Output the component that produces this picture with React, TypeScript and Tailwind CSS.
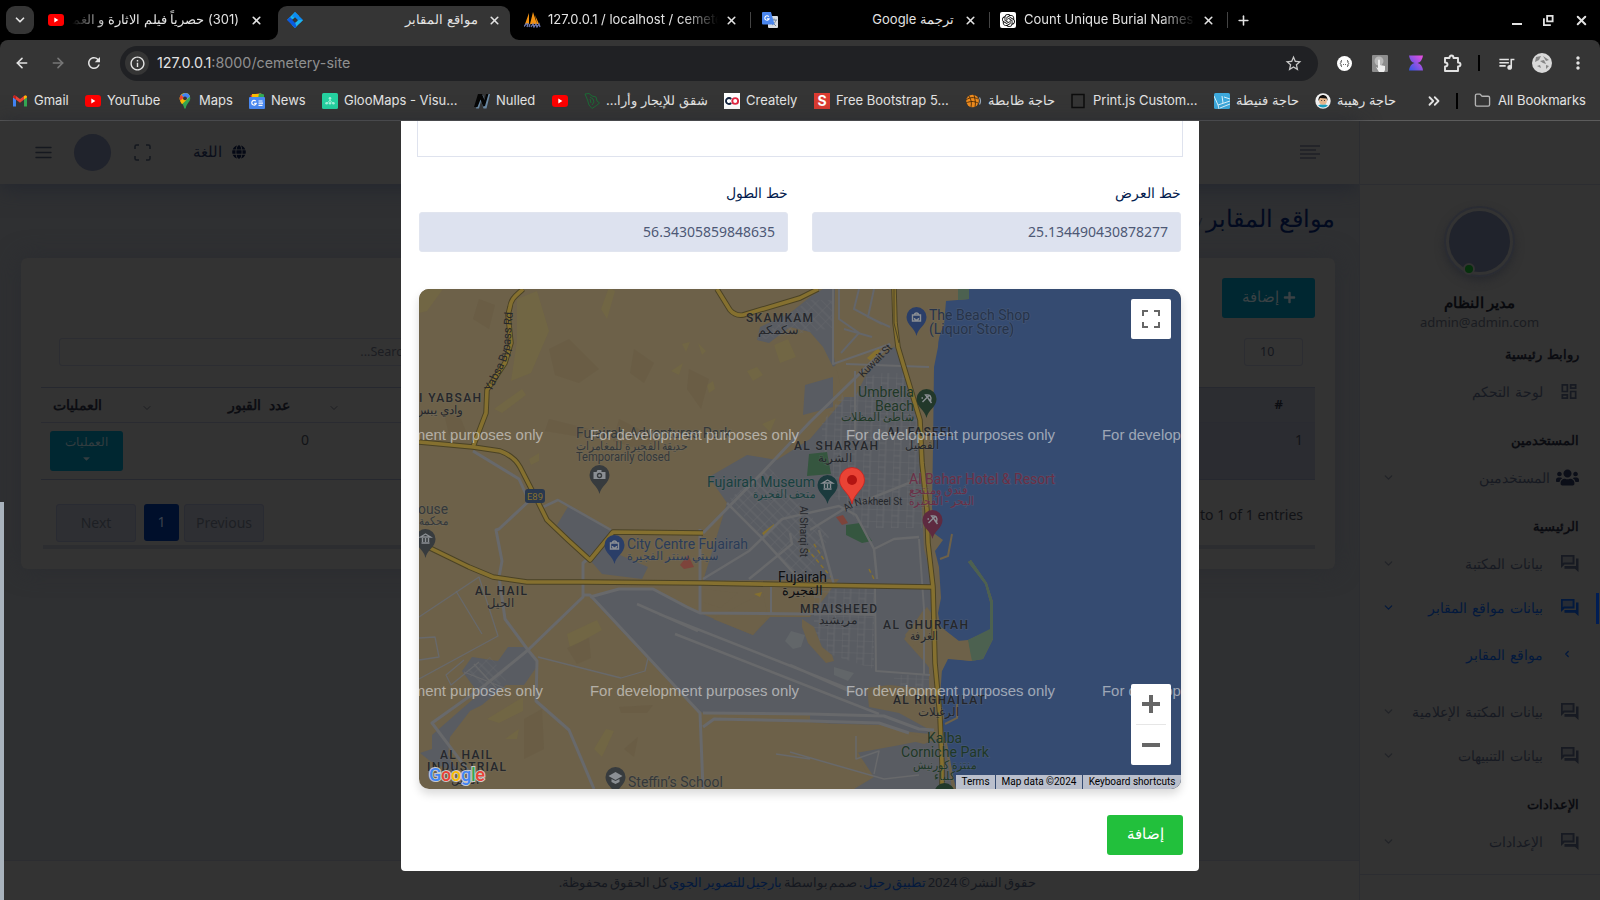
import React from "react";
import {
  ArrowLeft,
  ArrowRight,
  ChevronDown,
  ChevronLeft,
  ChevronsRight,
  Folder,
  Plus,
  X,
} from "lucide-react";
import { FaPlus, FaUsers, FaCaretDown, FaGlobe } from "react-icons/fa";
import {
  MdInfoOutline,
  MdOutlineDashboard,
  MdQueueMusic,
  MdRefresh,
  MdStarOutline,
  MdMoreVert,
} from "react-icons/md";
import { SiOpenai } from "react-icons/si";

/* ---------- favicons ---------- */

const YouTubeIcon = () => (
  <svg width="16" height="16" viewBox="0 0 16 16">
    <rect x="0" y="2" width="16" height="12" rx="3" fill="#f00" />
    <path d="M6.3 5.6v4.8L10.4 8z" fill="#fff" />
  </svg>
);

const GmailIcon = () => (
  <svg width="16" height="16" viewBox="0 0 16 16">
    <path d="M1 4v9.5h3V6.500z" fill="#4285f4" />
    <path d="M15 4v9.5h-3V6.500z" fill="#34a853" />
    <path d="M1 4.2C1 2.4 2.8 2 4 3l4 3 4-3c1.200-1 3-.6 3 1.200L8 9.700z" fill="#ea4335" />
    <path d="M12 3c1.200-1 3-.6 3 1.200L12 6.600z" fill="#fbbc04" />
    <path d="M4 3C2.800 2 1 2.400 1 4.200L4 6.600z" fill="#c5221f" />
  </svg>
);

const MapsIcon = () => (
  <svg width="16" height="16" viewBox="0 0 16 16">
    <path d="M8 0a5.300 5.300 0 0 0-5.300 5.300C2.700 9 6.500 10.500 7.300 15.500h1.400C9.500 10.500 13.300 9 13.300 5.300A5.300 5.300 0 0 0 8 0z" fill="#34a853" />
    <path d="M8 0a5.300 5.300 0 0 1 5 3.400L5 11.200C3.600 9.400 2.700 7.900 2.700 5.300A5.300 5.300 0 0 1 8 0z" fill="#fbbc04" />
    <path d="M8 0a5.300 5.300 0 0 1 5 3.400L9.500 6.500 4 2z" fill="#4285f4" />
    <path d="M4 2L7 4.500 3.200 7.800A5.300 5.300 0 0 1 4 2z" fill="#ea4335" />
    <circle cx="8" cy="5.300" r="1.900" fill="#353535" />
  </svg>
);

const NewsIcon = () => (
  <svg width="16" height="16" viewBox="0 0 16 16">
    <path d="M1.500 2L12 0l1 5H2z" fill="#ea4335" />
    <path d="M3 1h10v5H3z" fill="#fbbc04" />
    <path d="M10 0l5 1.500V6H9z" fill="#34a853" />
    <rect y="4" width="16" height="12" rx="1" fill="#4a8af4" />
    <path d="M6.800 8.200a2.300 2.300 0 1 0 .5 2.200H5.200M9.500 8h4M9.500 10.200h4.500M9.500 12.300h4" stroke="#fff" strokeWidth="1.200" fill="none" />
  </svg>
);

const GlooIcon = () => (
  <svg width="16" height="16" viewBox="0 0 16 16">
    <rect width="16" height="16" rx="1.500" fill="#25d1a0" />
    <path d="M8 5v3M4.500 10.500L8 7.500l3.500 3" stroke="#b8f5e2" strokeWidth=".8" fill="none" />
    <g fill="#a4f0da">
      <circle cx="8" cy="5.200" r="1.300" />
      <circle cx="4.600" cy="10.200" r="1.300" />
      <circle cx="8" cy="10.200" r="1.300" />
      <circle cx="11.400" cy="10.200" r="1.300" />
    </g>
  </svg>
);

const NulledIcon = () => (
  <svg width="16" height="16" viewBox="0 0 16 16">
    <path d="M2 15.500L6 2h3l2.500 7.500L13.500 1H16l-3.500 14.500h-3L7 8l-2 7.500z" fill="#6b8aa5" />
    <path d="M0 14L4 1h4l2.500 6L12 1h2.500L11 13 9 13.500 6.500 6.500 3.500 14z" fill="#060606" />
  </svg>
);

const LeafIcon = () => (
  <svg width="16" height="16" viewBox="0 0 16 16" fill="none" stroke="#1c6b35" strokeWidth="1">
    <path d="M1 1l4-.5 3 2.500 4 1 1 4 2.500 2-3 2.500L8 15.500 5 12 3.500 7z" />
    <path d="M6 4l3 2 1 3-2 3M6 6l1 4" />
  </svg>
);

const CreatelyIcon = () => (
  <svg width="16" height="16" viewBox="0 0 16 16">
    <rect width="16" height="16" fill="#fff" />
    <path d="M7.200 6a3 3 0 1 0 0 4" stroke="#14243f" strokeWidth="1.900" fill="none" />
    <circle cx="11.200" cy="8" r="2.900" stroke="#e02742" strokeWidth="1.900" fill="none" />
  </svg>
);

const BootstrapSIcon = () => (
  <span className="flex h-4 w-4 items-center justify-center bg-[#dc3b31] text-[14px] leading-none font-bold text-white">S</span>
);

const BallIcon = () => (
  <svg width="16" height="16" viewBox="0 0 16 16">
    <circle cx="6.500" cy="8" r="6.300" fill="#f08c1e" />
    <path d="M0 7c4-3 8-3 12-1M0 10c4-2 8-2 12 0M3 3c2 3 3 7 2 11M8 2c1 4 2 8 1 12" stroke="#3a2208" strokeWidth=".8" fill="none" />
    <path d="M13.500 4.500q2 3.500 0 7" stroke="#9ab" strokeWidth="1.200" fill="none" />
  </svg>
);

const PrintIcon = () => (
  <svg width="16" height="16" viewBox="0 0 16 16">
    <rect x="1" y="1.500" width="12" height="13" fill="none" stroke="#0c0c0c" strokeWidth="1.500" />
  </svg>
);

const BlueTileIcon = () => (
  <svg width="16" height="16" viewBox="0 0 16 16">
    <rect width="16" height="16" rx="1.500" fill="#3da9dc" />
    <path d="M0 3l4 9 12-4M4 12l1 4M8 3l1 7M10 4l6 2M6 15l10-4" stroke="#d7f1fc" strokeWidth="1" fill="none" />
  </svg>
);

const FaceIcon = () => (
  <svg width="16" height="16" viewBox="0 0 16 16">
    <circle cx="8" cy="8" r="7.700" fill="#f3f3f3" />
    <path d="M3 12.500q5-2.500 10 0a7 7 0 0 1-10 0z" fill="#18a2c4" />
    <ellipse cx="8" cy="7.500" rx="3.900" ry="4.300" fill="#e8b98f" />
    <path d="M3.500 8C2.500 0 13.500 0 12.500 8L11.500 5.500 5 5z" fill="#15110e" />
    <path d="M6.300 7.500h.8M9 7.500h.8" stroke="#222" />
  </svg>
);

const SiteIcon = () => (
  <svg width="16" height="16" viewBox="0 0 16 16">
    <path d="M8 0l4 4-4 2.500L4.500 8 0 8z" fill="#19b5f1" />
    <path d="M8 0l8 8-3.500 3.500L10 8 7.500 5.500 5 4.500z" fill="#0d8bf2" />
    <path d="M16 8l-8 8-3.500-3.500L8 10.500 12 8z" fill="#1fb6ee" />
    <path d="M0 8l3-3 3 3 2 2.500 1.500 4L8 16z" fill="#0a5be0" />
    <path d="M8 5.200L10.800 8 8 10.800 5.200 8z" fill="#353535" />
  </svg>
);

const SailIcon = () => (
  <svg width="17" height="16" viewBox="0 0 17 16">
    <path d="M5 1L1 12h4zM9 0L6 12h7zM11 3l4 9h-2z" fill="#f29111" />
    <path d="M0 14.500l2-2.500h2l-1 3M5 15l1-3M7 15l2-3 1 3 2-3 1 3 2-3 1 3" stroke="#6c78af" strokeWidth="1.300" fill="none" />
  </svg>
);

const TranslateIcon = () => (
  <svg width="16" height="16" viewBox="0 0 16 16">
    <rect x="6" y="4" width="10" height="12" rx="1" fill="#d8dce2" />
    <path d="M9 8h6M12 6.500V8m2 0c-.5 2-2 4-4 5m0-3l4 4" stroke="#6b7d94" strokeWidth=".9" fill="none" />
    <path d="M1 0h8l3.500 12.500H1a1 1 0 0 1-1-1V1a1 1 0 0 1 1-1z" fill="#4a86ee" />
    <path d="M6.800 4.700a2.200 2.200 0 1 0 .3 2H5" stroke="#fff" strokeWidth="1.100" fill="none" />
  </svg>
);

const GptIcon = () => (
  <span className="flex h-4 w-4 items-center justify-center rounded-[2px] bg-white text-black">
    <SiOpenai size={13} />
  </span>
);

/* ---------- browser chrome ---------- */

type TabProps = {
  icon: React.ReactNode;
  title: string;
  width: string;
  rtl?: boolean;
  fade?: "left" | "right";
};

const Tab = ({ icon, title, width, rtl, fade }: TabProps) => (
  <div className={`flex h-full shrink-0 items-center ${width}`}>
    <span className="w-4 shrink-0">{icon}</span>
    <span
      dir={rtl ? "rtl" : "ltr"}
      className={`ml-2 flex-1 overflow-hidden text-[13px] whitespace-nowrap ${
        fade === "left"
          ? "mr-2 [mask-image:linear-gradient(to_right,transparent,black_35px)]"
          : fade === "right"
            ? "mr-1 [mask-image:linear-gradient(to_left,transparent,black_35px)]"
            : "mr-[7px]"
      }`}
    >
      {title}
    </span>
    <X size={13} strokeWidth={3} className="mr-[11px] ml-[3px] shrink-0" />
  </div>
);

const TabBar = () => (
  <div className="flex h-10 shrink-0 items-center bg-black text-[#e3e3e3]">
    <button className="ml-1.5 flex h-7 w-7 items-center justify-center rounded-[9px] bg-[#353535]">
      <ChevronDown size={14} strokeWidth={3} />
    </button>
    <Tab width="ml-[14px] w-[226px]" icon={<YouTubeIcon />} title="(301) حصرياً فيلم الاثارة و الغموض" rtl fade="left" />
    <div className="relative ml-[4px] h-[34px] w-[232px] self-end rounded-t-[9px] bg-[#353535] pl-[9px]">
      <svg className="absolute bottom-0 -left-[9px]" width="9" height="9"><path d="M9 0v9H0A9 9 0 0 0 9 0z" fill="#353535" /></svg>
      <svg className="absolute -right-[9px] bottom-0" width="9" height="9"><path d="M0 0v9h9A9 9 0 0 1 0 0z" fill="#353535" /></svg>
      <div className="flex h-[28px] items-center">
        <Tab width="w-[225px]" icon={<SiteIcon />} title="مواقع المقابر" rtl />
      </div>
    </div>
    <Tab width="ml-[14px] w-[225px]" icon={<SailIcon />} title="127.0.0.1 / localhost / cemetery" fade="right" />
    <div className="ml-px h-4 w-px bg-[#444]" />
    <Tab width="ml-[11px] w-[226px]" icon={<TranslateIcon />} title="ترجمة Google" rtl />
    <div className="ml-px h-4 w-px bg-[#444]" />
    <Tab width="ml-[10px] w-[226px]" icon={<GptIcon />} title="Count Unique Burial Names." fade="right" />
    <div className="ml-px h-4 w-px bg-[#444]" />
    <Plus size={15} strokeWidth={2.500} className="ml-2" />
    <div className="ml-auto flex items-center gap-[20px] pr-[11px]">
      <svg width="12" height="14" viewBox="0 0 12 14"><path d="M1 11h10" stroke="#e3e3e3" strokeWidth="2" /></svg>
      <svg width="11" height="11" viewBox="0 0 12 12" fill="none" stroke="#e3e3e3" strokeWidth="2">
        <path d="M4.500 1h6v6h-6zM1 3.500V11h7.500" />
      </svg>
      <X size={15} strokeWidth={3.200} />
    </div>
  </div>
);

const AddressBar = () => (
  <div className="flex h-[47px] shrink-0 items-center rounded-t-lg bg-[#353535] pb-px text-[#e3e3e3]">
    <ArrowLeft size={16} strokeWidth={2.400} className="ml-3.5" />
    <ArrowRight size={16} strokeWidth={2.400} className="ml-5 text-[#777]" />
    <MdRefresh size={18} className="ml-[19px]" />
    <div className="ml-[17px] flex h-[35px] w-[1198px] items-center rounded-full bg-[#202124] pl-[5px]">
      <span className="flex h-6 w-6 items-center justify-center rounded-full bg-[#353535]">
        <MdInfoOutline size={17} />
      </span>
      <span className="ml-2 text-[14.300px] text-[#8f8f8f]">
        <span className="text-[#e3e3e3]">127.0.0.1</span>:8000/cemetery-site
      </span>
      <MdStarOutline size={19} className="mr-[15px] ml-auto text-[#c7c7c7]" />
    </div>
    <svg className="ml-[19px]" width="15" height="15" viewBox="0 0 15 15">
      <circle cx="7.500" cy="7.500" r="7.500" fill="#fff" />
      <path d="M5 4.500Q3.500 4.500 4 6.500L3.300 7.500 4 8.500Q3.500 10.500 5 10.500M10 4.500Q11.500 4.500 11 6.500L11.700 7.500 11 8.500Q11.500 10.500 10 10.500M6 8.500h.8M8.200 8.500H9" stroke="#444" strokeWidth="1" fill="none" />
    </svg>
    <svg className="ml-[20px]" width="16" height="17" viewBox="0 0 16 17">
      <rect width="16" height="17" rx="1" fill="#8d8d8d" />
      <circle cx="7" cy="6" r="4.500" fill="#b8b8b8" />
      <path d="M6 5.500a1 1 0 0 1 2 0V10l5 1v4l-1 2H7l-3-5 2 1z" fill="#eee" />
    </svg>
    <svg className="ml-[21px]" width="14" height="16" viewBox="0 0 15 16">
      <defs>
        <linearGradient id="hourglass" x1="1" y1="0" x2="0" y2="1">
          <stop offset="0" stopColor="#f04fe0" />
          <stop offset="1" stopColor="#2f57e8" />
        </linearGradient>
      </defs>
      <path d="M0 0h15Q14 7 9 8q5 1 6 8H0Q1 9 6 8 1 7 0 0z" fill="url(#hourglass)" />
    </svg>
    <svg className="ml-[20px]" width="19" height="19" viewBox="0 0 19 19" fill="none" stroke="#e3e3e3" strokeWidth="1.900" strokeLinejoin="round">
      <path d="M2 4h4.500q0-2.500 2-2.500T10.500 4H15v4.500q2.500 0 2.500 2t-2.500 2V17H2v-4.500q2.500 0 2.500-2T2 8.500z" />
    </svg>
    <div className="ml-[16px] h-4 w-0.5 bg-black" />
    <MdQueueMusic size={19} className="ml-[17px]" />
    <svg className="ml-[16px]" width="20" height="20" viewBox="0 0 20 20">
      <circle cx="10" cy="10" r="10" fill="#d9d9d9" />
      <path d="M4 4l5-1-2 4-4 2zM11 3l6 4-3 1zM8 8l4-1 2 4-3-1zM5 13l3-1 1 3zM14 12l3 1-3 3z" fill="#858585" />
    </svg>
    <MdMoreVert size={20} className="ml-[16px]" />
  </div>
);

const bookmarks: { icon: React.ReactNode; label: string; width: string; rtl?: boolean }[] = [
  { icon: <GmailIcon />, label: "Gmail", width: "w-[73px]" },
  { icon: <YouTubeIcon />, label: "YouTube", width: "w-[92px]" },
  { icon: <MapsIcon />, label: "Maps", width: "w-[72px]" },
  { icon: <NewsIcon />, label: "News", width: "w-[73px]" },
  { icon: <GlooIcon />, label: "GlooMaps - Visu...", width: "w-[152px]" },
  { icon: <NulledIcon />, label: "Nulled", width: "w-[78px]" },
  { icon: <YouTubeIcon />, label: "", width: "w-[32px]" },
  { icon: <LeafIcon />, label: "شقق للإيجار وأرا...", width: "w-[140px]", rtl: true },
  { icon: <CreatelyIcon />, label: "Creately", width: "w-[90px]" },
  { icon: <BootstrapSIcon />, label: "Free Bootstrap 5...", width: "w-[152px]" },
  { icon: <BallIcon />, label: "حاجة ظابطة", width: "w-[105px]", rtl: true },
  { icon: <PrintIcon />, label: "Print.js Custom...", width: "w-[143px]" },
  { icon: <BlueTileIcon />, label: "حاجة فنيطة", width: "w-[101px]", rtl: true },
  { icon: <FaceIcon />, label: "حاجة رهيبة", width: "w-[82px]", rtl: true },
];

const BookmarksBar = () => (
  <div className="flex h-[34px] shrink-0 items-center border-b border-[#5c5c5c] bg-[#353535] pb-1.5 pl-3 text-[13px] text-[#e3e3e3]">
    {bookmarks.map((b, i) => (
      <div key={i} className={`flex shrink-0 items-center gap-1.5 whitespace-nowrap ${b.width}`}>
        <span className="w-4 shrink-0">{b.icon}</span>
        <span dir={b.rtl ? "rtl" : "ltr"}>{b.label}</span>
      </div>
    ))}
    <ChevronsRight size={18} strokeWidth={2.400} className="ml-[28px]" />
    <div className="ml-[13px] h-4 w-0.5 bg-black" />
    <Folder size={17} strokeWidth={1.900} className="ml-[16px] text-[#b4b4b4]" />
    <span className="ml-[7px] whitespace-nowrap">All Bookmarks</span>
  </div>
);

/* ---------- dashboard page, dimmed by the backdrop ---------- */

const TopBar = () => (
  <header className="flex h-[63px] shrink-0 items-center bg-[#333] pb-px pl-[35px] text-[#15181f] shadow-[0_4px_20px_#23262e]">
    <svg width="17" height="13" viewBox="0 0 17 13" stroke="currentColor" strokeWidth="1.300" strokeLinecap="round">
      <path d="M1 1.500h15M1 6.500h15M1 11.500h15" />
    </svg>
    <span className="ml-[22px] h-[37px] w-[37px] rounded-full bg-[#20232c]" />
    <svg className="ml-[23px]" width="17" height="17" viewBox="0 0 17 17" fill="none" stroke="currentColor" strokeWidth="1.500">
      <path d="M1 5V2.500Q1 1 2.500 1H5M12 1h2.500Q16 1 16 2.500V5M16 12v2.500q0 1.500-1.500 1.500H12M5 16H2.500Q1 16 1 14.500V12" />
    </svg>
    <span dir="rtl" className="ml-[42px] w-[29px] pb-0.5 text-[15px] whitespace-nowrap text-[#0a0e1a]">اللغة</span>
    <FaGlobe size={14} className="ml-[10px] text-[#040814]" />
    <svg className="mr-[39px] ml-auto" width="20" height="15" viewBox="0 0 20 15" stroke="#1f2127" strokeWidth="1.600">
      <path d="M0 1h20M0 5h16M0 9h20M0 13h16" />
    </svg>
  </header>
);

const TableCard = () => (
  <section className="ml-[21px] flex h-[311px] w-[1314px] flex-col rounded-md bg-[#333] shadow-[0_0_25px_#2a2c30]">
    <div className="flex justify-end pt-5 pr-5">
      <button dir="rtl" className="flex h-10 w-[93px] items-center justify-center gap-1 rounded-[3px] bg-[#002731] pb-0.5 text-[14.500px] text-[#3a4144]">
        <FaPlus size={13} />
        إضافة
      </button>
    </div>
    <div className="mt-5 flex justify-between pr-[32px] pl-[38px] text-[12.500px]">
      <div dir="rtl" className="h-7 w-[400px] rounded-[3px] border border-[#2c2d32] pr-[34px] leading-[26px] text-[#1c1d22]">
        <span className="block w-full pr-[14px]">Search...</span>
      </div>
      <div className="h-7 w-[59px] rounded-[3px] border border-[#2c2d32] pl-[15px] leading-[26px] text-[#15171e]">10</div>
    </div>
    <div className="mt-[21px] mr-5 ml-5 flex h-[93px] flex-col border-y border-[#26282f]">
      <div className="flex h-[35px] items-center border-b border-[#2a2b31] pl-[9px] text-[14px] font-bold text-[#0c0d12]">
        <span dir="rtl" className="w-[52px] pb-0.5 whitespace-nowrap">العمليات</span>
        <ChevronDown size={12} className="mt-1.5 ml-[39px] text-[#1d1e22]" />
        <span dir="rtl" className="ml-[70px] w-[67px] pb-0.5 [word-spacing:4px] whitespace-nowrap">عدد القبور</span>
        <ChevronDown size={12} className="mt-1.5 ml-[38px] text-[#1d1e22]" />
        <span className="ml-auto flex h-full w-[140px] items-center justify-end bg-[#2c2d31] pr-8 text-[13px]">#</span>
      </div>
      <div className="flex flex-1 pl-[9px] text-[14px] text-[#121317]">
        <button className="mt-2 flex h-10 w-[73px] flex-col items-center rounded-[3px] bg-[#002731] pt-[3px] text-[12px] leading-4 text-[#333d40]">
          العمليات
          <FaCaretDown size={11} className="mt-[3px]" />
        </button>
        <span className="mt-[6px] ml-[178px]">0</span>
        <span className="ml-auto w-[140px] bg-[#2b2c31] pt-[6px] pr-3 text-right">1</span>
      </div>
    </div>
    <div className="mt-[23px] flex justify-between pr-[32px] pl-[35px] text-[14px]">
      <div className="flex h-[39px] items-center text-[#1d1f24]">
        <span className="flex h-[38px] w-20 items-center justify-center rounded-[3px] border border-[#292b32] bg-[#2e2f33]">Next</span>
        <span className="mr-px ml-[8px] flex h-[37px] w-[35px] items-center justify-center rounded-[3px] bg-[#000f2b] pb-0.5 text-[#3a414d]">1</span>
        <span className="ml-1 flex h-[38px] w-20 items-center justify-center rounded-[3px] border border-[#292b32] bg-[#2e2f33]">Previous</span>
      </div>
      <span className="mt-px text-[#111216]">Showing 1 to 1 of 1 entries</span>
    </div>
    <div className="mt-[3px] mr-5 ml-[22px] h-1 bg-[#2c2d30]" />
  </section>
);

const ForumIcon = () => (
  <svg width="19" height="19" viewBox="0 0 19 19">
    <path d="M3 2.500h10v7H4.500L3 11z" fill="currentColor" fillOpacity=".25" />
    <path d="M1 1h13.500v9.500H4.500L1 14zM2.800 2.800v6.500l.8-.7h9V2.800z" fill="currentColor" fillRule="evenodd" />
    <path d="M16 4.500h2.500V18L15 14.700H4.500V12H16z" fill="currentColor" />
  </svg>
);

const menu: { kind: "heading" | "item" | "users" | "dash" | "active" | "sub"; label: string; gap: string }[] = [
  { kind: "heading", label: "روابط رئيسية", gap: "mt-0" },
  { kind: "dash", label: "لوحة التحكم", gap: "mt-[13px]" },
  { kind: "heading", label: "المستخدمين", gap: "mt-[25px]" },
  { kind: "users", label: "المستخدمين", gap: "mt-[13px]" },
  { kind: "heading", label: "الرئيسية", gap: "mt-[25px]" },
  { kind: "item", label: "بيانات المكتبة", gap: "mt-[13px]" },
  { kind: "active", label: "بيانات مواقع المقابر", gap: "mt-[20px]" },
  { kind: "sub", label: "مواقع المقابر", gap: "mt-[23px]" },
  { kind: "item", label: "بيانات المكتبة الإعلامية", gap: "mt-[33px]" },
  { kind: "item", label: "بيانات التنبيهات", gap: "mt-[20px]" },
  { kind: "heading", label: "الإعدادات", gap: "mt-[25px]" },
  { kind: "item", label: "الإعدادات", gap: "mt-[13px]" },
];

const Sidebar = () => (
  <aside className="flex w-[241px] shrink-0 flex-col border-l border-[#2c2d31] bg-[#333]">
    <div className="h-16 shrink-0 border-b border-[#2c2d31]" />
    <div className="flex h-[158px] shrink-0 flex-col items-center pt-[21px] pr-px">
      <div className="relative h-[71px] w-[71px] rounded-full border-2 border-[#2a2c33] p-[3px] shadow-[0_4px_8px_#292a2e]">
        <div className="h-full w-full rounded-full bg-[#20232c]" />
        <span className="absolute bottom-0 left-[17px] h-[12px] w-[12px] rounded-full border-2 border-[#333] bg-[#06300c]" />
      </div>
      <span dir="rtl" className="mt-[15px] text-[15px] leading-5 font-bold text-[#08090d]">مدير النظام</span>
      <span className="text-[13px] leading-[20px] text-[#1a1c21]">admin@admin.com</span>
    </div>
    <nav dir="rtl" className="flex flex-col">
      {menu.map((m, i) => {
        const blue = m.kind === "active" || m.kind === "sub";
        return (
          <div key={i} className={`relative flex h-6 items-center pr-[21px] text-[14px] [word-spacing:1.5px] whitespace-nowrap ${m.gap} ${blue ? "text-[#03193d]" : "text-[#171a22]"}`}>
            {m.kind === "heading" && <span className="text-[13.300px] font-bold text-[#0b0c11]">{m.label}</span>}
            {m.kind === "users" && (
              <>
                <FaUsers size={23} className="mb-0.5 text-[#0b0e18]" />
                <span className="mr-[6px] pb-[2px]">{m.label}</span>
              </>
            )}
            {m.kind !== "heading" && m.kind !== "users" && (
              <>
                <span className="mb-0.5 flex w-[20px] justify-center">
                  {m.kind === "dash" && <MdOutlineDashboard size={21} className="mt-px" />}
                  {(m.kind === "item" || m.kind === "active") && <ForumIcon />}
                  {m.kind === "sub" && <ChevronLeft size={10} strokeWidth={3} className="mr-1" />}
                </span>
                <span className="mr-[16px] pb-[2px]">{m.label}</span>
              </>
            )}
            {(m.kind === "item" || m.kind === "users" || m.kind === "active") && (
              <ChevronDown size={13} className={`mr-auto mb-px ml-[22px] ${blue ? "" : "text-[#212328]"}`} />
            )}
            {m.kind === "active" && <span className="absolute -top-[3px] right-px h-[31px] w-[3px] bg-[#001d54]" />}
          </div>
        );
      })}
    </nav>
    <div className="mt-[20px] flex-1 border-t border-[#2c2d31]" />
  </aside>
);

const Dashboard = () => (
  <div className="flex h-full bg-[#2f3032] font-['Noto_Sans',sans-serif]">
    <div className="flex w-[1359px] shrink-0 flex-col">
      <TopBar />
      <h1 dir="rtl" className="mt-[17px] mb-[23px] h-[34px] pr-6 text-[24px] leading-[34px] whitespace-nowrap text-[#020a1f]">
        مواقع المقابر<span className="text-[13px] text-[#1a1d26]"> / مواقع المقابر</span>
      </h1>
      <TableCard />
      <footer dir="rtl" className="mt-auto flex h-10 items-center border-t border-[#2c2d31] bg-[#333] pt-1 pr-[323px] text-[13px] [word-spacing:-1.8px] whitespace-nowrap text-[#15181f]">
        <span>
          حقوق النشر © 2024 <span className="text-[#03193d]">تطبيق رحيل</span>. صمم بواسطة <span className="text-[#03193d]">بارجيل للتصوير الجوي</span> كل الحقوق محفوظة.
        </span>
      </footer>
    </div>
    <Sidebar />
  </div>
);

/* ---------- map ---------- */

type LabelProps = { x: number; y: number; w: number; t: string; c?: string; s?: number; b?: boolean };

const Label = ({ x, y, w, t, c = "#25272b", s = 13, b }: LabelProps) => (
  <text
    x={x}
    y={y}
    textLength={w}
    lengthAdjust={b ? "spacing" : "spacingAndGlyphs"}
    fill={c}
    fontSize={b ? 12 : s}
    fontWeight={b ? 500 : 400}
    stroke="#77797c"
    strokeOpacity=".2"
    strokeWidth="1.6"
    paintOrder="stroke"
  >
    {t}
  </text>
);

const Pin = ({ x, y, c, children }: { x: number; y: number; c: string; children?: React.ReactNode }) => (
  <g transform={`translate(${x} ${y})`}>
    <path d="M0 19C-1.500 11-10 8-10 0a10 10 0 0 1 20 0C10 8 1.500 11 0 19z" fill={c} />
    <g stroke="#8b8f94" strokeWidth="1.400" fill="none">{children}</g>
  </g>
);

const museum = <path d="M-5-2L0-5 5-2zM-4 4h8M-3-1v4M0-1v4M3-1v4" />;
const bag = <path d="M-4-2h8v6h-8zM-2-2a2 2 0 0 1 4 0M-2 1a2 2 0 0 0 4 0" />;
const umbrella = <path d="M-4 3L3-4M-1-4Q6-5 4 2ZM2 0l3 4M-5-1h1.500" />;

const yellowRoads = [
  "M104 0C98 6 92 9 91 18L89 26 92 54 86 74 68 101 67 124 54 158",
  "M0 153L54 158 81 162Q95 167 101 178L118 211 128 231 149 251 171 271 194 243 284 244",
  "M5 256L11 259 50 278 74 288 108 293H164L284 294 391 296 514 298",
  "M298 0L311 21Q316 27 324 26L381 9 399 0",
  "M475 0L476 34 479 58 488 88 501 131 503 174 508 221 509 254 514 298 516 374 521 428 523 474V500",
];

const grayRoads: [string, number][] = [
  ["M54 162L100 190 110 212 80 240 77 241 83 272 80 288 86 330 109 361 118 372 117 412 150 441 175 500", 3],
  ["M124 218L139 211 192 241", 2.5],
  ["M284 244L343 184 391 133 471 55", 3],
  ["M164 293V274L178 262M164 293V308L109 361 65 397 13 434 50 483M164 306H171L281 424 284 500", 3],
  ["M171 308L200 300H234L268 318 281 324 391 325", 3],
  ["M281 240V324M284 424L391 425 465 427 500 440 515 441M284 438L295 430 391 432 460 434 490 444", 3],
  ["M218 315L279 342M256 345L391 398 460 425M371 376L430 402M240 325L435 402", 2.5],
  ["M308 214L342 248 380 290M284 290L330 262 363 230 420 217 437 226 455 260 458 290M330 290L373 255 371 244", 2.5],
  ["M414 0V75L471 55M436 82V150M427 75L510 78", 2],
  ["M391 241L425 220 485 196 500 190M400 241L415 296M455 260L475 250 500 248", 2.5],
  ["M0 328L60 288 79 347 0 390M37 302L63 345M0 349L16 348 20 368 0 371M45 371L27 386 32 396 60 373", 1.3],
  ["M119 368L202 389 226 382 229 369M45 383L88 400M55 375L80 402", 1.3],
  ["M456 298L457 382 511 386M500 250L505 320V385M352 296V324M414 325L457 326M371 325H456", 2],
  ["M371 463L430 480 465 490 500 486M437 447V470L460 462 455 485M357 465L391 470", 1.5],
];

const CityMap = () => (
  <svg width="762" height="500" viewBox="0 0 762 500" className="block font-['Roboto','Noto_Sans',sans-serif]">
    <defs>
      <pattern id="blocks" width="15" height="12" patternUnits="userSpaceOnUse" patternTransform="rotate(2)">
        <path d="M0 0H15M0 0V12M0 6H7M7 0V12" stroke="#66686b" strokeWidth="1" fill="none" />
      </pattern>
      <pattern id="blocksDiag" width="12" height="10" patternUnits="userSpaceOnUse" patternTransform="rotate(-45)">
        <path d="M0 0H12M0 0V10M6 0V10" stroke="#66686b" strokeWidth="1" fill="none" />
      </pattern>
      <path id="yabsa" d="M72 103L83 81Q92 64 92 46L94 22" />
      <path id="nakheel" d="M427 223Q440 213 455 216L486 216" />
    </defs>
    <rect width="762" height="500" fill="#6d6149" />
    {/* hills */}
    <g fill="#716644">
      <path d="M0 0h24L8 22 0 24zM98 10l20-8 12 40-18 42-20 8 6-40zM75 120l28-20 4 6-24 18zM182 20l8-22 6 4-8 28zM263 55l8-2-4 10zM279 54l8 8-4 4zM252 82l12-8-4 12zM288 96l6-4 2 8-6 4zM110 170l10-6v8l-8 4zM148 345l30-14 5 10-32 18zM68 430l36-22v14l-24 12zM175 460l12-20 8 2-12 26zM86 450l14-10-2 10zM355 56l14-6 8 18-16 6zM343 135l14-6-6 14zM328 82l10-4 6 8-10 6z" />
    </g>
    <g fill="#695d45" opacity=".8">
      <path d="M130 60l20-10 30 30-20 14-24-8zM215 60l20 14-10 20-14-10zM130 130l40 10-8 8-36-6zM24 120l18 10 8 20-20-4zM270 80l20 10-8 30-14-20zM148 359l22-10 2 20-14 6zM105 430l18-10 2 40-20 10zM200 418l34-2-6 8h-26zM200 130l40 20-20 10-26-8zM60 10l16 6-6 24-16-10zM205 460l14-12-4 20z" />
    </g>
    {/* water */}
    <path d="M550 0V10L527 12 525 36Q519 48 519 58L515 78 514 158 513 218 516 245 524 251 516 262 520 278 522 309 519 324 522 341 538 352 549 351 571 341 571 313 566 295 549 273 552 271 568 294 574 313V350L564 370 552 372 528 369 523 381 521 408 525 428 522 441 528 454 534 486 537 500H762V0z" fill="#354b71" />
    <path d="M539 0h11v10l-11 1zM549 351L571 340V313L566 295 549 273 552 271 568 294 574 313V350L564 370 552 372z" fill="#4c6150" />
    <path d="M533 245l-4 22-8 3M538 415v14l-12 6" stroke="#6d6149" strokeWidth="2" fill="none" />
    {/* built-up areas */}
    <g fill="#595c62">
      <path d="M338 51L341 38 371 24 391 8 404 0H416V48L426 70 414 78 404 58 391 43 371 38 350 54zM386 96l28-8v30l-30 8z" />
      <path d="M454 73L471 53 482 66 488 88 499 128 504 158 503 218 505 260 516 300 516 340 505 320 485 350 510 378V400L470 396 448 399 450 418 480 424 511 441V445L391 433 391 424H284L274 418 171 308 204 300H234L281 324 334 346 351 328 391 328 420 290 284 292 308 214 290 188 328 166 358 171 391 150 425 110 427 98z" />
      <path d="M138 236l12-20 42 25-21 29zM171 271l22-25 8 20 28 12-6 12-40-5zM437 460l28-15 40 10 20-8 8 53h-98l20-12-12-18zM43 382l10-14 26 4 10-14h18l12 18-14 20-18 0-24 20-12 6-20 26-2 18 12 20-30-14-10-8 12-4v-14L60 405z" />
    </g>
    <path d="M433 92l30-8h24l16 60v95h-60l-15-20-25-25v-60z" fill="url(#blocks)" />
    <path d="M395 300h60v80l-60-20zM475 386h35v15h-35zM420 0h50v40h-50z" fill="url(#blocks)" />
    <path d="M310 210l40-32 60 70-20 40h-12z" fill="url(#blocksDiag)" />
    <path d="M338 51l52-40h24v28zM45 383l26-15 18 22-18 12z" fill="url(#blocksDiag)" opacity=".8" />
    <g fill="#6d6149">
      <path d="M416 0h58l2 34 3 20-28 24-15 30h-12l-10-44zM334 346l-40-16 50-26 5 24zM284 300l35 4-18 15-17-6zM383 330l12 8 8 20 10 8 2 6-8 2-18-20-6-16zM391 434l70 2 50 14-30 6-44 8 14 26-20 10h-40z" />
      <path d="M486 346l22-28 14 20 18 14 9 0 4 20-24-2-6 12-12-2-12-18z" />
    </g>
    <path d="M420 0v30l20 14-18 20M440 0l-5 20 28 15M455 0l-6 28 22 10M425 40l28 8" stroke="#64666a" strokeWidth="2" fill="none" />
    <g fill="#35563f">
      <path d="M390 165l18-2 4 22-24 2zM427 236l14-2 12 18-10 2-16-8z" />
    </g>
    <g fill="#7d443b">
      <path d="M417 228l7-2 5 8-6 2zM261 276l8-10 6 12-10 2z" />
    </g>
    <g fill="#85702f">
      <path d="M448 69l11-10 4 6-10 8zM343 244l12-9 1 3-11 9zM335 305l8-2-2 5z" />
    </g>
    <path d="M388 260l26 30M395 255l10 16M450 280l5 10" stroke="#85702f" strokeWidth="1.500" strokeDasharray="4 3" fill="none" />
    <path d="M366 352l6-10 14 4-4 12-8 2zM415 378l20 6-6 8-14-6z" fill="#626669" />
    <g fill="none" stroke="#68696b" strokeLinejoin="round">
      {grayRoads.map(([d, w], i) => (
        <path key={i} d={d} strokeWidth={w} />
      ))}
    </g>
    <g fill="none" strokeLinejoin="round">
      {yellowRoads.map((d) => (
        <path key={d} d={d} stroke="#4a4225" strokeWidth="5.500" />
      ))}
      {yellowRoads.map((d) => (
        <path key={d} d={d} stroke="#85702f" strokeWidth="3.600" />
      ))}
      <path d="M475 0L475 34 480 54" stroke="#4a4225" strokeWidth="1" />
    </g>

    {/* places */}
    <Label x={327} y={33} w={67} t="SKAMKAM" b />
    <Label x={339} y={45} w={41} t="سكمكم" s={12} />
    <Label x={0} y={113} w={62} t="I YABSAH" b />
    <Label x={-4} y={125} w={48} t="وادي يبس" s={12} />
    <text fontSize="11.500" fill="#25272b"><textPath href="#yabsa" textLength="84">Yabsa Bypass Rd</textPath></text>
    <Label x={157} y={149} w={155} t="Fujairah Adventures Park" c="#34383a" s={14} />
    <Label x={157} y={161} w={111} t="حديقة الفجيرة للمغامرات" c="#34383a" s={12} />
    <Label x={157} y={172} w={94} t="Temporarily closed" c="#34383a" s={12} />
    <Pin x={180.5} y={186} c="#373b3e">
      <path d="M-6-3h3l1-2h4v2h4v7h-12z" fill="#8b8f94" stroke="none" />
      <circle r="2" cy=".5" stroke="#373b3e" />
    </Pin>
    <rect x="106" y="200" width="20" height="14" rx="3" fill="#29384e" />
    <text x="116" y="211" textAnchor="middle" fontSize="9.500" fill="#85702f">E89</text>
    <Label x={-1} y={225} w={30} t="ouse" c="#34383a" s={14} />
    <Label x={0} y={236} w={29} t="محكمة" c="#34383a" s={12} />
    <Pin x={6.5} y={250} c="#373b3e">{museum}</Pin>
    <Label x={288} y={198} w={108} t="Fujairah Museum" c="#18403f" s={14} />
    <Label x={334} y={209} w={62} t="متحف الفجيرة" c="#18403f" s={12} />
    <Label x={375} y={161} w={84} t="AL SHARYAH" b />
    <Label x={399} y={173} w={34} t="الشرية" s={12} />
    <Pin x={408.5} y={196} c="#1b3a3d">{museum}</Pin>
    <Label x={439} y={108} w={56} t="Umbrella" c="#1f3827" s={14} />
    <Label x={456} y={122} w={39} t="Beach" c="#1f3827" s={14} />
    <Label x={422} y={132} w={73} t="شاطئ المظلات" c="#1f3827" s={12} />
    <Pin x={507.5} y={110} c="#22382a">{umbrella}</Pin>
    <Pin x={497.5} y={28} c="#2a3e68">{bag}</Pin>
    <Label x={510} y={31} w={101} t="The Beach Shop" c="#26334a" s={14} />
    <Label x={510} y={45} w={85} t="(Liquor Store)" c="#26334a" s={14} />
    <text x="444" y="89" transform="rotate(-45 444 89)" fontSize="10.500" fill="#25272b" textLength="42">Kuwait St</text>
    <Label x={468} y={147} w={67} t="AL FASEEL" b />
    <Label x={486} y={160} w={34} t="الفصيل" s={12} />
    <Label x={490} y={195} w={146} t="Al Bahar Hotel & Resort" c="#6b2f46" s={14} />
    <Label x={490} y={205} w={59} t="فندق ومنتجع" c="#6b2f46" s={12} />
    <Label x={490} y={216} w={65} t="البحر - الفجيرة" c="#6b2f46" s={12} />
    <Pin x={513.5} y={231} c="#5e2a40">{umbrella}</Pin>
    <text fontSize="10" fill="#25272b"><textPath href="#nakheel" textLength="58">Al Nakheel St</textPath></text>
    <text x="381" y="217" transform="rotate(90 381 217)" fontSize="10" fill="#25272b" textLength="51">Al Sharqi St</text>
    <Pin x={195.5} y={256} c="#2a3e68">{bag}</Pin>
    <Label x={208} y={260} w={121} t="City Centre Fujairah" c="#2b3c58" s={14} />
    <Label x={208} y={271} w={91} t="سيتي سنتر الفجيرة" c="#2b3c58" s={12} />
    <Label x={56} y={306} w={52} t="AL HAIL" b />
    <Label x={68} y={318} w={27} t="الحيل" s={12} />
    <Label x={359} y={293} w={49} t="Fujairah" c="#0d0e10" s={14} />
    <Label x={363} y={306} w={41} t="الفجيرة" c="#0d0e10" s={13} />
    <Label x={381} y={324} w={77} t="MRAISHEED" b />
    <Label x={400} y={335} w={38} t="مريشيد" s={12} />
    <Label x={464} y={340} w={85} t="AL GHURFAH" b />
    <Label x={491} y={351} w={28} t="الغرفة" s={12} />
    <Label x={474} y={415} w={92} t="AL RIGHAILAT" b />
    <Label x={499} y={427} w={41} t="الرغيلات" s={12} />
    <Label x={508} y={454} w={35} t="Kalba" c="#1f3827" s={14} />
    <Label x={482} y={468} w={88} t="Corniche Park" c="#1f3827" s={14} />
    <Label x={494} y={480} w={63} t="منتزة كورنيش" c="#1f3827" s={12} />
    <Label x={515} y={491} w={21} t="كلباء" c="#1f3827" s={12} />
    <Pin x={525.5} y={504} c="#22382a" />
    <Label x={21} y={470} w={52} t="AL HAIL" b />
    <Label x={8} y={482} w={79} t="INDUSTRIAL" b />
    <Label x={32} y={495} w={28} t="الحيل" s={12} />
    <Pin x={196.5} y={488} c="#373b3e"><path d="M-7-1L0-5 7-1 0 3zM-4 2v3l4 2 4-2V2L0 4z" fill="#8b8f94" stroke="none" /></Pin>
    <Label x={209} y={498} w={95} t="Steffin’s School" c="#34383a" s={14} />

    {/* watermark */}
    <g fontFamily="Liberation Sans" fontSize="15" fill="#e6e6e6" fillOpacity=".6">
      {[151, 407].map((y) =>
        [-85, 171, 427, 683].map((x) => (
          <text key={`${x}-${y}`} x={x} y={y} textLength="209" lengthAdjust="spacingAndGlyphs">For development purposes only</text>
        )),
      )}
    </g>

    {/* selected position */}
    <path d="M433 215C431 204 420.500 200 420.500 191a12.500 12.500 0 0 1 25 0C445.500 200 435 204 433 215z" fill="#ea4335" stroke="#c5221f" strokeWidth=".8" />
    <circle cx="433" cy="191" r="5" fill="#b31412" />

    <text x="10" y="492" fontSize="18" fontWeight="500" textLength="56" stroke="#c9c9c9" strokeWidth="2" paintOrder="stroke">
      <tspan fill="#4285f4">G</tspan><tspan fill="#ea4335">o</tspan><tspan fill="#fbbc04">o</tspan><tspan fill="#4285f4">g</tspan><tspan fill="#34a853">l</tspan><tspan fill="#ea4335">e</tspan>
    </text>
  </svg>
);

const MapPanel = () => (
  <div className="relative h-[500px] w-[762px] overflow-hidden rounded-[10px]">
    <CityMap />
    <button className="absolute top-[10px] right-[10px] flex h-10 w-10 items-center justify-center rounded-[2px] bg-white">
      <svg width="18" height="18" viewBox="0 0 18 18" fill="none" stroke="#666" strokeWidth="2">
        <path d="M1 6V1h5M12 1h5v5M17 12v5h-5M6 17H1v-5" />
      </svg>
    </button>
    <div className="absolute right-[10px] bottom-[24px] flex h-[81px] w-10 flex-col items-center rounded-[2px] bg-white">
      <svg width="40" height="40" stroke="#666" strokeWidth="4"><path d="M11 20h18M20 11v18" /></svg>
      <div className="h-px w-[30px] bg-[#e6e6e6]" />
      <svg width="40" height="40" stroke="#666" strokeWidth="4"><path d="M11 20h18" /></svg>
    </div>
    <div className="absolute right-0 bottom-0 flex h-[14px] gap-px font-[Roboto,sans-serif] text-[10px] leading-[14px] whitespace-nowrap text-black">
      <span className="w-[39px] bg-[#babfcc] text-center">Terms</span>
      <span className="w-[86px] bg-[#babfcc] text-center">Map data ©2024</span>
      <span className="w-[98px] bg-[#babfcc] text-center">Keyboard shortcuts</span>
    </div>
  </div>
);

/* ---------- modal ---------- */

const CoordinateField = ({ label, value }: { label: string; value: string }) => (
  <div dir="rtl" className="w-[369px]">
    <label className="block h-[22px] text-[13.700px] leading-[22px] text-[#031b4e]">{label}</label>
    <div className="mt-[8px] h-10 rounded-[3px] border border-[#e1e5ef] bg-[#dde2ef] pr-3 text-[14px] leading-[38px] text-[#4d5875]">{value}</div>
  </div>
);

const SiteModal = () => (
  <div className="absolute top-0 left-[401px] h-[750px] w-[798px] rounded-b bg-white px-4 font-['Noto_Sans',sans-serif]">
    <div className="h-9 border-x border-b border-[#dfe3ee]" />
    <div className="mx-0.5 mt-[25px] flex justify-between">
      <CoordinateField label="خط الطول" value="56.34305859848635" />
      <CoordinateField label="خط العرض" value="25.134490430878277" />
    </div>
    <div className="mx-0.5 mt-[37px] rounded-[10px] shadow-[0_5px_10px_rgba(0,0,0,0.15)]">
      <MapPanel />
    </div>
    <div className="mt-[26px] flex justify-end">
      <button className="h-10 w-[76px] rounded-[3px] bg-[#22c03c] pb-[3px] text-[14.500px] text-white">إضافة</button>
    </div>
  </div>
);

export default function App() {
  return (
    <div className="flex h-[900px] w-[1600px] flex-col overflow-hidden bg-black font-[Inter,sans-serif]">
      <TabBar />
      <div className="bg-black">
        <AddressBar />
      </div>
      <BookmarksBar />
      <div className="relative min-h-0 flex-1">
        <Dashboard />
        <SiteModal />
        <div className="absolute bottom-0 left-0 h-[398px] w-1 bg-[#a9b3bd]" />
      </div>
    </div>
  );
}
